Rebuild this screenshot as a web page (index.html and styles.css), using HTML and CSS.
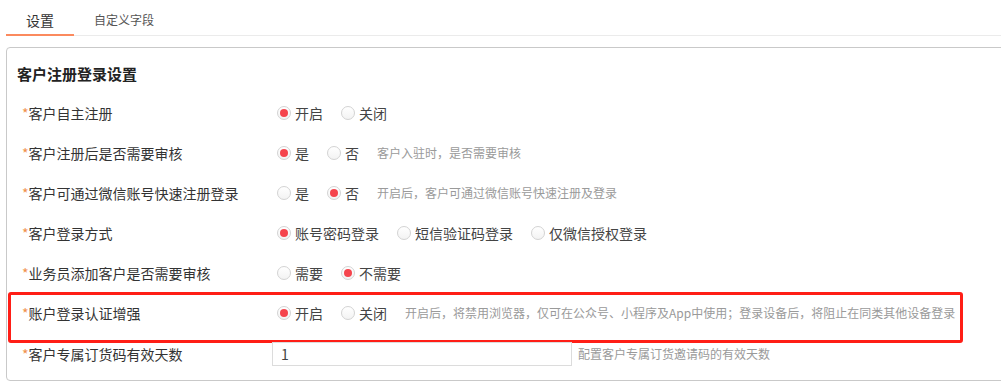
FILE: index.html
```html
<!DOCTYPE html>
<html lang="zh-CN">
<head>
    <meta charset="UTF-8">
    <title>客户注册登录设置</title>
    <link rel="stylesheet" href="styles.css">
</head>
<body>
    <div class="page">
        <!-- 顶部标签 -->
        <div class="tabs">
            <div class="tab active">设置</div>
            <div class="tab">自定义字段</div>
        </div>

        <!-- 设置卡片 -->
        <div class="card">
            <h3 class="card-title">客户注册登录设置</h3>

            <div class="form">
                <div class="row">
                    <div class="label"><span class="req">*</span>客户自主注册</div>
                    <div class="control">
                        <label class="radio"><span class="dot checked"></span>开启</label>
                        <label class="radio"><span class="dot"></span>关闭</label>
                    </div>
                </div>

                <div class="row">
                    <div class="label"><span class="req">*</span>客户注册后是否需要审核</div>
                    <div class="control">
                        <label class="radio"><span class="dot checked"></span>是</label>
                        <label class="radio"><span class="dot"></span>否</label>
                        <span class="hint">客户入驻时，是否需要审核</span>
                    </div>
                </div>

                <div class="row">
                    <div class="label"><span class="req">*</span>客户可通过微信账号快速注册登录</div>
                    <div class="control">
                        <label class="radio"><span class="dot"></span>是</label>
                        <label class="radio"><span class="dot checked"></span>否</label>
                        <span class="hint">开启后，客户可通过微信账号快速注册及登录</span>
                    </div>
                </div>

                <div class="row">
                    <div class="label"><span class="req">*</span>客户登录方式</div>
                    <div class="control">
                        <label class="radio"><span class="dot checked"></span>账号密码登录</label>
                        <label class="radio"><span class="dot"></span>短信验证码登录</label>
                        <label class="radio"><span class="dot"></span>仅微信授权登录</label>
                    </div>
                </div>

                <div class="row">
                    <div class="label"><span class="req">*</span>业务员添加客户是否需要审核</div>
                    <div class="control">
                        <label class="radio"><span class="dot"></span>需要</label>
                        <label class="radio"><span class="dot checked"></span>不需要</label>
                    </div>
                </div>

                <div class="row highlighted">
                    <div class="label"><span class="req">*</span>账户登录认证增强</div>
                    <div class="control">
                        <label class="radio"><span class="dot checked"></span>开启</label>
                        <label class="radio"><span class="dot"></span>关闭</label>
                        <span class="hint">开启后，将禁用浏览器，仅可在公众号、小程序及App中使用；登录设备后，将阻止在同类其他设备登录</span>
                    </div>
                    <div class="mark"></div>
                </div>

                <div class="row last">
                    <div class="label"><span class="req">*</span>客户专属订货码有效天数</div>
                    <div class="control input-control">
                        <input type="text" class="text-input" value="1">
                        <span class="hint small-gap">配置客户专属订货邀请码的有效天数</span>
                    </div>
                </div>
            </div>
        </div>
    </div>
</body>
</html>
```

FILE: styles.css
```css
/* 基础 */
* {
    margin: 0;
    padding: 0;
    box-sizing: border-box;
}

body {
    font-family: "Noto Sans CJK SC", "Microsoft YaHei", sans-serif;
    font-size: 14px;
    color: #333;
    background: #fff;
    overflow: hidden;
}

.page {
    width: 1030px;
    padding-left: 6px;
}

/* 标签页 */
.tabs {
    display: flex;
    align-items: flex-end;
    border-bottom: 1px solid #ebebeb;
}

.tab {
    padding: 10px 20px 4px;
    line-height: 20px;
    font-size: 12px;
    color: #555;
    border-bottom: 2px solid transparent;
    margin-bottom: -1px;
}

.tab.active {
    font-size: 14px;
    color: #333;
    border-bottom-color: #fb8a5e;
}

/* 卡片 */
.card {
    margin-top: 11px;
    border: 1px solid #c9c9c9;
    border-radius: 4px;
    padding-bottom: 5px;
}

.card-title {
    margin: 16px 0 9px 10px;
    font-size: 15px;
    line-height: 20px;
    font-weight: bold;
    color: #222;
}

/* 表单行 */
.row {
    position: relative;
    display: flex;
    align-items: center;
    height: 40px;
    padding-left: 15px;
}

.row.last {
    height: 42px;
}

.label {
    width: 250px;
    line-height: 20px;
    color: #333;
}

.req {
    color: #f0904a;
}

.control {
    display: flex;
    align-items: center;
    padding-left: 5px;
    line-height: 20px;
}

.input-control {
    padding-left: 0;
}

.radio {
    display: flex;
    align-items: center;
    margin-right: 18px;
    color: #444;
}

.dot {
    width: 14px;
    height: 14px;
    margin-right: 4px;
    border: 1px solid #d3d3d3;
    border-radius: 50%;
    background: linear-gradient(#fff, #f3f3f3);
    display: flex;
    align-items: center;
    justify-content: center;
}

.dot.checked::after {
    content: "";
    width: 8px;
    height: 8px;
    border-radius: 50%;
    background: #f5454d;
}

.hint {
    font-size: 12px;
    color: #9a9a9a;
}

.small-gap {
    margin-left: 6px;
}

.text-input {
    width: 300px;
    height: 24px;
    padding-left: 8px;
    border: 1px solid #dcdcdc;
    font-family: inherit;
    font-size: 14px;
    color: #444;
    outline: none;
}

/* 红色标注框 */
.mark {
    position: absolute;
    left: 1px;
    top: -1px;
    width: 955px;
    height: 51px;
    border: 3px solid #ff1e16;
    border-radius: 3px;
    pointer-events: none;
}
```
